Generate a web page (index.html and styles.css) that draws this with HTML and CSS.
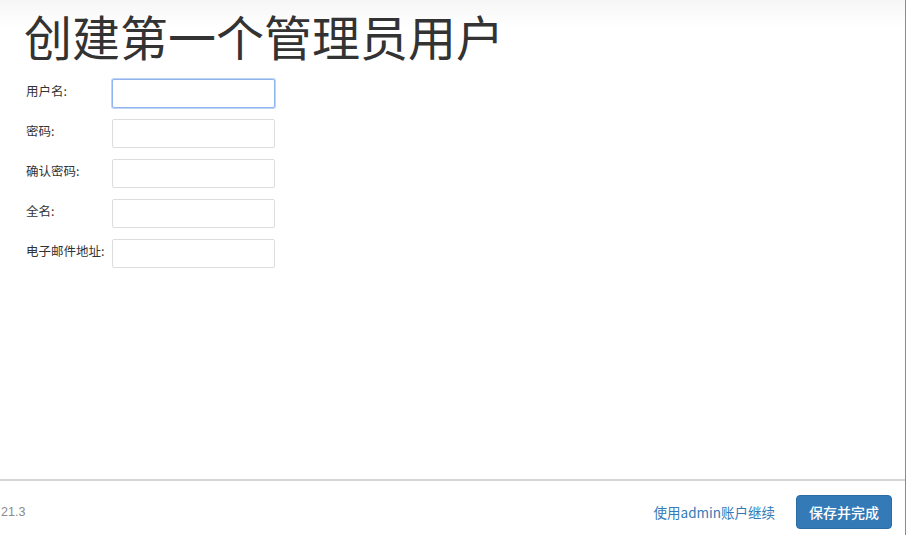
FILE: index.html
```html
<!DOCTYPE html>
<html>
<head>
  <title>创建第一个管理员用户</title>
  <meta charset="utf-8">
  <link rel="stylesheet" href="styles.css">
</head>
<body>
  <div class="wizard">
    <div class="wizard-body">
      <h1 class="wizard-title">创建第一个管理员用户</h1>

      <form class="admin-form">
        <div class="form-row">
          <label class="form-label" for="username">用户名:</label>
          <input class="form-input is-focused" id="username" type="text">
        </div>
        <div class="form-row">
          <label class="form-label" for="password1">密码:</label>
          <input class="form-input" id="password1" type="password">
        </div>
        <div class="form-row">
          <label class="form-label" for="password2">确认密码:</label>
          <input class="form-input" id="password2" type="password">
        </div>
        <div class="form-row">
          <label class="form-label" for="fullname">全名:</label>
          <input class="form-input" id="fullname" type="text">
        </div>
        <div class="form-row">
          <label class="form-label" for="email">电子邮件地址:</label>
          <input class="form-input" id="email" type="text">
        </div>
      </form>
    </div>

    <!-- Footer with version and actions -->
    <div class="wizard-footer">
      <span class="version">21.3</span>
      <div class="footer-actions">
        <a class="skip-link" href="#">使用admin账户继续</a>
        <button class="btn-primary" type="button">保存并完成</button>
      </div>
    </div>
  </div>
</body>
</html>
```

FILE: styles.css
```css
body {
  margin: 0;
  background: #fff;
  font-family: "Noto Sans CJK SC", "Liberation Sans", sans-serif;
  color: #333;
}

.wizard {
  width: 906px;
  height: 535px;
  box-sizing: border-box;
  border-right: 1px solid #8c8c8c;
  display: flex;
  flex-direction: column;
  overflow: hidden;
}

.wizard-body {
  flex: 1;
  background: linear-gradient(to bottom, #f6f6f6 0, #fff 28px);
}

.wizard-title {
  margin: 0;
  padding: 0 0 0 24px;
  font-size: 48px;
  font-weight: 400;
  line-height: 70px;
  color: #333;
}

.admin-form {
  display: flex;
  flex-direction: column;
  gap: 11px;
  margin-top: 9px;
  padding-left: 26px;
}

.form-row {
  display: flex;
  align-items: flex-start;
}

.form-label {
  width: 86px;
  padding-top: 3px;
  font-size: 12.5px;
  line-height: 18px;
  color: #333;
  white-space: nowrap;
}

.form-input {
  width: 163px;
  height: 29px;
  box-sizing: border-box;
  margin: 0;
  border: 1px solid #ddd;
  border-radius: 2px;
  background: #fff;
  outline: none;
}

.form-input.is-focused {
  border-color: #8fb4f0;
  box-shadow: 0 0 0 1px rgba(120, 160, 235, 0.45);
}

.wizard-footer {
  height: 56px;
  box-sizing: border-box;
  border-top: 2px solid #d4d4d4;
  display: flex;
  align-items: center;
  justify-content: space-between;
  padding: 0 13px 0 1px;
}

.version {
  font-family: "Liberation Sans", sans-serif;
  font-size: 12.5px;
  color: #8a8a8a;
  margin-top: 8px;
}

.footer-actions {
  display: flex;
  align-items: center;
  gap: 21px;
  margin-top: 7px;
}

.skip-link {
  color: #337ab7;
  text-decoration: none;
  font-size: 13.5px;
}

.btn-primary {
  width: 96px;
  height: 34px;
  border: 1px solid #2e6da4;
  border-radius: 4px;
  background: #337ab7;
  color: #fff;
  font-family: inherit;
  font-size: 14px;
  font-weight: 500;
  padding: 0;
}
```
